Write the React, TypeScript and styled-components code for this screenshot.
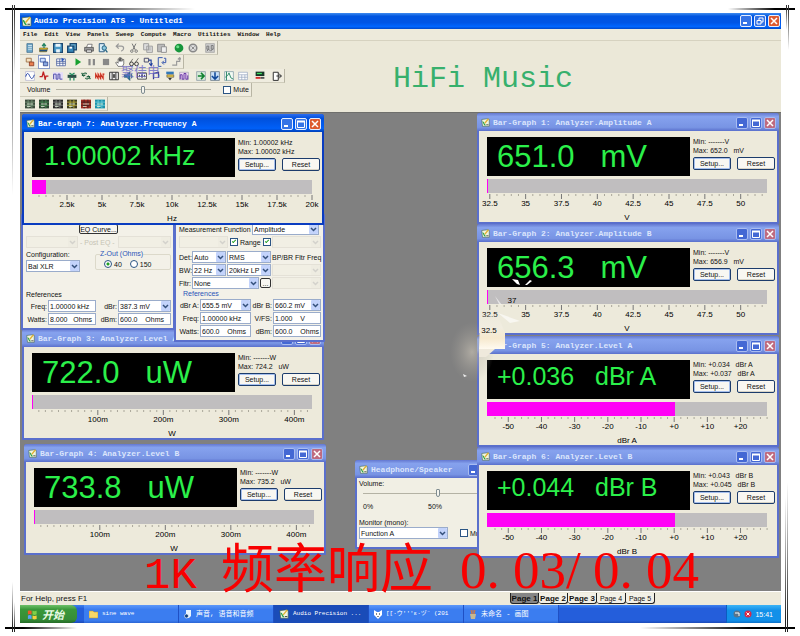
import React from 'react';
import styled, { createGlobalStyle, css } from 'styled-components';

const GlobalStyle = createGlobalStyle`
  *, *::before, *::after { box-sizing: border-box; }
  body { margin: 0; background: #fff; font-family: "Liberation Sans", "Noto Sans CJK SC", sans-serif; font-size: 7px; color: #111; }
  button, input, select { font-family: inherit; font-size: 7px; color: inherit; margin: 0; padding: 0; }
  h1, h2, p { margin: 0; font-weight: 400; }
`;

const mono = '"Liberation Mono", "Noto Sans CJK SC", monospace';

/* ---------- page and decorative corners ---------- */

const Page = styled.div`
  position: relative;
  display: flex;
  flex-direction: column;
  min-height: 100vh;
  padding: 13px 19px 14px 20px;
`;

const Corner = styled.svg<{ $v: 'top' | 'bottom'; $h: 'left' | 'right' }>`
  position: absolute;
  ${(p) => p.$v}: 0;
  ${(p) => p.$h}: 0;
  pointer-events: none;
`;

function Corners() {
  return (
    <>
      <Corner $v="top" $h="left" width="200" height="200" aria-hidden="true">
        <defs>
          <linearGradient id="fr"><stop offset="0.25" stopColor="#000" /><stop offset="1" stopColor="#000" stopOpacity="0" /></linearGradient>
          <linearGradient id="fd" x2="0" y2="1"><stop offset="0.1" stopColor="#333" /><stop offset="1" stopColor="#333" stopOpacity="0" /></linearGradient>
        </defs>
        <rect x="5" y="8" width="190" height="2" fill="url(#fr)" />
        <rect x="12" y="5" width="1" height="190" fill="url(#fd)" />
        <rect x="14" y="5" width="1" height="70" fill="url(#fd)" />
      </Corner>
      <Corner $v="top" $h="right" width="100" height="60" aria-hidden="true">
        <defs>
          <linearGradient id="fl"><stop offset="0" stopColor="#000" stopOpacity="0" /><stop offset="0.7" stopColor="#000" /></linearGradient>
        </defs>
        <rect x="28" y="8" width="67" height="2" fill="url(#fl)" />
        <rect x="95" y="5" width="0" height="0" />
        <rect x="95" y="8" width="0" height="0" />
        <rect x="86" y="5" width="1" height="25" fill="url(#fd)" />
        <rect x="88" y="5" width="1" height="45" fill="url(#fd)" />
      </Corner>
      <Corner $v="bottom" $h="left" width="100" height="60" aria-hidden="true">
        <defs>
          <linearGradient id="fu" x2="0" y2="1"><stop offset="0" stopColor="#333" stopOpacity="0" /><stop offset="0.9" stopColor="#222" /></linearGradient>
        </defs>
        <rect x="5" y="50" width="72" height="2" fill="url(#fr)" />
        <rect x="12" y="5" width="1" height="50" fill="url(#fu)" />
        <rect x="14" y="25" width="1" height="30" fill="url(#fu)" />
      </Corner>
      <Corner $v="bottom" $h="right" width="160" height="160" aria-hidden="true">
        <rect x="0" y="150" width="155" height="2" fill="url(#fl)" />
        <rect x="145" y="20" width="1" height="135" fill="url(#fu)" />
        <rect x="147" y="5" width="1" height="150" fill="url(#fu)" />
      </Corner>
    </>
  );
}

/* ---------- window chrome ---------- */

const AppBar = styled.header`
  display: flex;
  align-items: center;
  gap: 2px;
  height: 16px;
  padding: 0 1px;
  background: linear-gradient(#3f8cf0, #0055e0 20%, #0055e5 60%, #0066ff 85%, #0048c8);
`;

const TitleText = styled.h2<{ $active?: boolean }>`
  flex: 1;
  overflow: hidden;
  white-space: nowrap;
  font: bold 8px/12px ${mono};
  color: ${(p) => (p.$active ? '#fff' : '#dbe5fc')};
`;

const Controls = styled.div`
  display: flex;
  gap: 2px;
`;

const ControlButton = styled.button<{ $close?: boolean; $dim?: boolean }>`
  display: grid;
  place-items: center;
  width: 12px;
  height: 12px;
  border: 1px solid ${(p) => (p.$dim ? '#a9bcf0' : '#e6eeff')};
  border-radius: 2px;
  background: ${(p) =>
    p.$close ? (p.$dim ? '#bf6b80' : '#dd5a30') : p.$dim ? '#4468d4' : '#3573e6'};
`;

function WindowControls({ dim, restore }: { dim?: boolean; restore?: boolean }) {
  return (
    <Controls>
      <ControlButton $dim={dim} aria-label="Minimize">
        <svg width="8" height="8"><path d="M1 6h4" stroke="#fff" strokeWidth="2" /></svg>
      </ControlButton>
      <ControlButton $dim={dim} aria-label={restore ? 'Restore' : 'Maximize'}>
        {restore ? (
          <svg width="8" height="8"><path d="M3 3V1h4v4H5M1 3.5h4v3.5H1z" stroke="#fff" fill="none" /></svg>
        ) : (
          <svg width="8" height="8"><path d="M.5 1.5h7v6h-7z" stroke="#fff" fill="none" /><path d="M0 1.5h8" stroke="#fff" strokeWidth="2" /></svg>
        )}
      </ControlButton>
      <ControlButton $dim={dim} $close aria-label="Close">
        <svg width="8" height="8"><path d="M1 1l6 6M7 1L1 7" stroke="#fff" strokeWidth="1.5" /></svg>
      </ControlButton>
    </Controls>
  );
}

function AppIcon({ size = 11 }: { size?: number }) {
  return (
    <svg width={size} height={size} viewBox="0 0 12 12" aria-hidden="true">
      <path d="M1 2l8-1 2 1v9H2z" fill="#f2f6e0" stroke="#385a40" strokeWidth=".7" />
      <path d="M2 5c2 0 2 5 4 4" stroke="#28a048" strokeWidth="1.6" fill="none" />
      <path d="M5 7l5-6" stroke="#e0b030" strokeWidth="1.6" />
      <path d="M7 9h3" stroke="#333" />
    </svg>
  );
}

/* ---------- menu and toolbars ---------- */

const MenuBar = styled.nav`
  display: flex;
  gap: 7px;
  height: 12px;
  padding-left: 3px;
  background: #edeadb;
  border-bottom: 1px solid #d6d2c0;
`;

const MenuItem = styled.button`
  border: 0;
  background: none;
  font: bold 6px/11px ${mono};
`;

const ToolZone = styled.section`
  position: relative;
  display: grid;
  grid-template-columns: 373px 1fr;
  height: 71px;
  background: #ebe8d8;
`;

const ToolRows = styled.div`
  display: flex;
  flex-direction: column;
  align-items: flex-start;
`;

const ToolRow = styled.div`
  display: flex;
  align-items: center;
  gap: 4px;
  height: 14px;
  padding: 0 2px 0 5px;
  border-right: 1px solid #b8b5a4;
  border-bottom: 1px solid #cfccbb;
  background: #efecdf;
`;

const ToolButton = styled.button<{ $gap?: boolean; $on?: boolean }>`
  display: grid;
  place-items: center;
  width: 10px;
  height: 12px;
  margin-left: ${(p) => (p.$gap ? 3 : 0)}px;
  border: 0;
  background: ${(p) => (p.$on ? '#fff' : 'none')};
  box-shadow: ${(p) => (p.$on ? '0 0 0 1px #8a9cc8' : 'none')};
`;

const Hero = styled.h1`
  padding-top: 20px;
  font: 30px/36px ${mono};
  white-space: nowrap;
  color: #37b06d;
`;

const Watermark = styled.span`
  position: absolute;
  left: 101px;
  top: 23px;
  font-size: 13px;
  line-height: 16px;
  color: #6d68c6;
  opacity: 0.8;
`;

const icons: Record<string, React.ReactNode> = {
  doc: <><path d="M3 1h9v14H3z" fill="#6fa8c8" stroke="#2a5a80" /><path d="M5 4h6M5 7h6M5 10h6" stroke="#fff" /></>,
  open: <><path d="M1 8h13l-2 6H1z" fill="#e8c030" stroke="#705a10" /><path d="M8 8V2M5 5l3-4 3 4" stroke="#208060" strokeWidth="2" fill="none" /><path d="M1 12h12" stroke="#205080" strokeWidth="3" /></>,
  save: <><path d="M1 1h14v14H1z" fill="#4a9ac8" stroke="#1c4870" strokeWidth="2" /><path d="M4 1h8v5H4zM5 10h6v5H5z" fill="#e8f4fa" /></>,
  saveall: <><path d="M5 1h10v10H5z" fill="#68b0d4" stroke="#1c4870" strokeWidth="2" /><path d="M1 5h10v10H1z" fill="#3a8abc" stroke="#1c4870" strokeWidth="2" /><path d="M4 6h4v3H4z" fill="#fff" /></>,
  print: <><path d="M4 7l2-5h7l-1 5" fill="#fff" stroke="#444" /><path d="M1 7h14v6H1z" fill="#999" stroke="#333" /><path d="M4 11h8v4H4z" fill="#ddd" stroke="#333" /></>,
  preview: <><path d="M2 1h8v13H2z" fill="#d8ecf6" stroke="#2a5a80" strokeWidth="1.5" /><circle cx="10" cy="8" r="3.5" fill="#8cc8e0" stroke="#206080" strokeWidth="1.5" /><path d="M12 11l3 4" stroke="#206080" strokeWidth="2" /></>,
  undo: <path d="M2 5h8c5 0 5 6 0 8M6 1L2 5l4 4" fill="none" stroke="#999" strokeWidth="2" />,
  cut: <><path d="M5 1l5 10M11 1L6 11" stroke="#777" strokeWidth="1.6" /><circle cx="4.5" cy="13" r="2" fill="none" stroke="#777" strokeWidth="1.5" /><circle cx="11.5" cy="13" r="2" fill="none" stroke="#777" strokeWidth="1.5" /></>,
  copy: <><path d="M1 1h8v10H1zM6 5h9v10H6z" fill="#ddd" stroke="#999" strokeWidth="1.4" /><path d="M8 8h5M8 11h5" stroke="#999" /></>,
  paste: <><path d="M1 2h11v12H1z" fill="#bbb" stroke="#888" strokeWidth="1.4" /><path d="M7 6h8v9H7z" fill="#eee" stroke="#888" strokeWidth="1.4" /></>,
  go: <><circle cx="8" cy="8" r="7" fill="#18963c" /><circle cx="6" cy="6" r="2.5" fill="#6ade88" /></>,
  halt: <><circle cx="8" cy="8" r="6" fill="#ddd" stroke="#888" strokeWidth="2.5" /><path d="M5.5 5.5l5 5M10.5 5.5l-5 5" stroke="#888" strokeWidth="1.5" /></>,
  tools: <><path d="M1 1h14v14H1z" fill="#ccc" stroke="#999" /><path d="M3 5h3v5H3zM10 4h3v6h-3zM3 13l3-3 3 3 4-4" stroke="#777" fill="none" strokeWidth="1.5" /></>,
  tag: <><path d="M2 2h8v6H2z" fill="#f4e0c0" stroke="#a07850" strokeWidth="1.5" /><path d="M7 8h7v6H7z" fill="#e88050" stroke="#803018" strokeWidth="1.2" /></>,
  net: <><path d="M2 2h8v6H2z" fill="#cfe0ff" stroke="#4868b0" strokeWidth="1.5" /><path d="M7 8h7v6H7z" fill="#88a8e0" stroke="#283c88" strokeWidth="1.2" /></>,
  grid: <><path d="M1 3h14v11H1zM1 7h14M1 10h14M6 3v11M11 3v11" fill="#fff" stroke="#405898" strokeWidth="1.2" /><path d="M9 1l4 3-4 3z" fill="#2050c0" /></>,
  play: <path d="M4 2l9 6-9 6z" fill="#18a030" />,
  pause: <path d="M4 3v10M11 3v10" stroke="#888" strokeWidth="3.5" />,
  stop: <path d="M3 3h10v10H3z" fill="#888" />,
  hand: <path d="M5 15L1 9l2-1 2 2V3h2v4V1h2v6V2h2v5l1-3h2v7l-2 4z" fill="#fff" stroke="#333" />,
  glasses: <><circle cx="4" cy="11" r="3" fill="none" stroke="#333" strokeWidth="1.5" /><circle cx="12" cy="11" r="3" fill="none" stroke="#333" strokeWidth="1.5" /><path d="M2 9l4-6M10 9l5-7M7 11h2" stroke="#333" /></>,
  step1: <><path d="M2 2h7v6H2z" fill="none" stroke="#446" strokeWidth="1.5" /><path d="M9 5h4v7M10 10l3 4 2-4" stroke="#2040a0" strokeWidth="1.8" fill="none" /></>,
  step2: <path d="M9 1H2v14h5M11 2h3v7H9M11 6L8 9l3 3" stroke="#3858b0" strokeWidth="1.6" fill="none" />,
  step3: <path d="M2 13h7V7h5V2M11 4l3-3 2 3" stroke="#999" strokeWidth="1.8" fill="none" />,
  sine: <><path d="M1 1h14v14H1z" fill="#fff" stroke="#aac" /><path d="M1 9c3-9 5-4 7 0s4 5 7-3" stroke="#2848a8" strokeWidth="1.6" fill="none" /></>,
  meter: <path d="M1 9h4l2-8 3 13 1-6h4" stroke="#c02020" strokeWidth="2" fill="none" />,
  wave: <><path d="M0 2h16v12H0z" fill="#e4dcfa" /><path d="M1 13V5h4v8h3V5h3v8h4" stroke="#5050a8" strokeWidth="1.6" fill="none" /></>,
  dsp: <><path d="M1 6h14v5H1z" fill="#2a5048" /><path d="M4 3l4 3 4-3M5 11v4M11 11v4" stroke="#209060" strokeWidth="2" fill="none" /></>,
  link: <path d="M2 8c0-5 6-6 7-3M14 8c0 5-6 6-7 3M1 3l3 5 3-2M15 13l-3-5-3 2" stroke="#1c6040" strokeWidth="1.7" fill="none" />,
  red: <><path d="M1 3h14v10H1z" fill="#f8d0c0" /><path d="M1 12V5l4 7V5l4 7V5l4 7V5h2" stroke="#c83020" strokeWidth="1.7" fill="none" /></>,
  film: <path d="M1 2h14v12H1zM5 2v12M11 2v12M7 5v6M9 5v6" stroke="#333" strokeWidth="1.5" fill="#eee" />,
  speaker: <path d="M2 6h4l5-5v14l-5-5H2zM13 4c2 3 2 6 0 8" fill="#2878a8" stroke="#184060" />,
  dcx: <path d="M1 3h14v10H1zM4 6v4M7 6h2v4H7zM12 6v4" stroke="#444" strokeWidth="1.5" fill="#fff" />,
  note: <path d="M4 13V4l8-2v9" stroke="#303888" strokeWidth="2" fill="none" />,
  stack: <><path d="M2 1h12v4H2z" fill="#3078b8" /><path d="M3 6h11v4H3z" fill="#e0c040" stroke="#555" /><path d="M5 11l3 4 3-4z" fill="#333" /></>,
  bars: <><path d="M1 2h14v12H1z" fill="#f0d8f4" stroke="#99a" /><path d="M2 13V6h3v7h3V4h3v9h3V7" stroke="#6030a0" strokeWidth="1.5" fill="none" /></>,
  right: <><path d="M1 1h14v14H1z" fill="#d8ead8" stroke="#789" /><path d="M3 8h9M8 3l5 5-5 5" stroke="#108030" strokeWidth="2.5" fill="none" /></>,
  down: <><path d="M1 1h14v14H1z" fill="#c8e0f8" stroke="#456" /><path d="M8 2v10M3 8l5 5 5-5" stroke="#104898" strokeWidth="2.5" fill="none" /></>,
  chart: <><path d="M1 1h14v14H1z" fill="#f4fbf4" stroke="#6a8a9a" /><path d="M2 10l4-3 2-4 3 8 4 2M4 1v14" stroke="#208060" strokeWidth="1.4" fill="none" /></>,
  table: <path d="M1 2h14v12H1zM1 6h14M1 10h14M6 6v8M11 6v8" fill="#fff" stroke="#8a9ab8" />,
  display: <><path d="M1 1h14v7H1z" fill="#183828" /><path d="M3 4h8" stroke="#40e060" strokeWidth="2" /><path d="M1 11h8" stroke="#d03030" strokeWidth="3" /><path d="M9 11h6" stroke="#555" strokeWidth="3" /></>,
  exit: <path d="M2 2h8v13H2zM7 8h8M11 4l4 4-4 4" stroke="#333" strokeWidth="1.6" fill="#fff" />,
};

const tile = (bg: string, fg: string) => (
  <>
    <path d="M0 1h16v14H0z" fill={bg} />
    <path d="M0 5h16M0 10h16M5 1v14M11 1v14" stroke={fg} strokeWidth="1.3" />
    <path d="M3 8h10M3 12h6" stroke="#dcecd4" strokeWidth="1.3" />
  </>
);
icons.t1 = tile('#3a4a3c', '#7a9a7c');
icons.t2 = tile('#2c4030', '#4a9058');
icons.t3 = tile('#282828', '#888');
icons.t4 = tile('#3c3c20', '#c8b840');
icons.t5 = tile('#a02c20', '#402020');
icons.t6 = tile('#1c90a8', '#70d0e0');

/* A leading "|" starts a new group, a leading "*" marks a pressed button. */
const toolbars = [
  ['doc', 'open', 'save', 'saveall', '|print', 'preview', '|undo', 'cut', 'copy', 'paste', '|go', 'halt', '|tools'],
  ['tag', '*net', '|grid', '|play', 'pause', 'stop', 'hand', 'glasses', 'step1', 'step2', 'step3'],
  ['sine', 'meter', 'wave', 'dsp', 'link', 'red', 'film', 'speaker', 'dcx', 'note', 'stack', 'bars', '|right', 'down', 'chart', 'table', '|display', '|exit'],
];

function Tools({ items }: { items: string[] }) {
  return (
    <ToolRow>
      {items.map((item) => {
        const name = item.replace(/^[|*]/, '');
        return (
          <ToolButton key={name} $gap={item[0] === '|'} $on={item[0] === '*'} aria-label={name}>
            <svg width="10" height="10" viewBox="0 0 16 16">{icons[name]}</svg>
          </ToolButton>
        );
      })}
    </ToolRow>
  );
}

const Slider = styled.input<{ $w: number }>`
  appearance: none;
  width: ${(p) => p.$w}px;
  height: 10px;
  background: linear-gradient(#b4b2a4, #b4b2a4) center / 100% 1px no-repeat;
  &::-webkit-slider-thumb {
    appearance: none;
    width: 4px;
    height: 8px;
    border: 1px solid #7f8c90;
    border-radius: 1px 1px 2px 2px;
    background: #f6f5ee;
  }
`;

const CheckLabel = styled.label`
  display: flex;
  align-items: center;
  gap: 2px;
  white-space: nowrap;
`;

const Check = styled.input`
  appearance: none;
  width: 8px;
  height: 8px;
  border: 1px solid #2b5584;
  background: #fff;
  &:checked::after {
    content: "";
    display: block;
    width: 4px;
    height: 2px;
    margin: 1px;
    border-left: 1px solid #21a121;
    border-bottom: 1px solid #21a121;
    transform: rotate(-45deg);
  }
`;

const VolumeLabel = styled.label`
  display: flex;
  align-items: center;
  gap: 6px;
  margin: 0 8px 0 2px;
`;

/* ---------- desktop canvas ---------- */

const Canvas = styled.main`
  position: relative;
  flex: 1;
  min-height: 479px;
  background: #808080;
  border-top: 1px solid #6f6f6c;
`;

const Frame = styled.section<{ $x: number; $y: number; $w: number; $h: number; $active?: boolean }>`
  position: absolute;
  left: ${(p) => p.$x}px;
  top: ${(p) => p.$y}px;
  width: ${(p) => p.$w}px;
  min-height: ${(p) => p.$h}px;
  display: flex;
  flex-direction: column;
  padding: 0 2px 2px;
  border-radius: 3px 3px 0 0;
  background: ${(p) => (p.$active ? '#0a3cc0' : '#5a6fcc')};
`;

const TitleBar = styled.header<{ $active?: boolean }>`
  display: flex;
  align-items: center;
  gap: 3px;
  height: 18px;
  margin: 0 -2px;
  padding: 1px 3px 0 4px;
  border-radius: 3px 3px 0 0;
  background: ${(p) =>
    p.$active
      ? 'linear-gradient(#2a6cf0, #0050dc 25%, #0060f8 80%, #0040b8)'
      : 'linear-gradient(#6478d0, #86a2ee 20%, #7894e4 80%, #5a70cc)'};
`;

const Body = styled.div`
  flex: 1;
  padding: 6px 7px 0 8px;
  background: #edeadb;
`;

const Readout = styled.div`
  display: grid;
  grid-template-columns: 203px 1fr;
  gap: 3px;
`;

const Lcd = styled.output<{ $size: number }>`
  display: block;
  height: 39px;
  padding-left: ${(p) => (p.$size === 27 ? 12 : 10)}px;
  background: #000;
  color: #2bf04a;
  font-size: ${(p) => p.$size}px;
  line-height: ${(p) => (p.$size > 28 ? 40 : p.$size > 26 ? 36 : 32)}px;
  white-space: pre;
`;

const Stats = styled.div`
  display: grid;
  grid-template-columns: 38px 38px;
  column-gap: 6px;
  align-content: start;
  margin-right: -7px;
`;

const Stat = styled.p`
  grid-column: 1 / -1;
  line-height: 9px;
  white-space: pre;
`;

const PushButton = styled.button<{ $focus?: boolean }>`
  height: 13px;
  margin-top: 2px;
  border: 1px solid #1c3c6c;
  border-radius: 2px;
  background: #f8f7f2;
  line-height: 9px;
  box-shadow: ${(p) => (p.$focus ? 'inset 0 0 0 1px #a6c0ee' : 'inset 0 -1px #d8d4c6')};
`;

const Track = styled.div`
  height: 14px;
  margin: 3px 3px 0 0;
  background: #c0bebf;
`;

const Fill = styled.div`
  height: 14px;
  min-width: 1px;
  background: #ff00f6;
`;

const AxisSvg = styled.svg`
  display: block;
  width: calc(100% - 3px);
  height: 29px;
  overflow: visible;
  font-size: 8px;
`;

interface Graph {
  title: string;
  x: number;
  y: number;
  value: string;
  size: number;
  min: string;
  max: string;
  fill: number;
  first: number;
  step: number;
  minor: number;
  labels: string[];
  unit: string;
  active?: boolean;
}

function Axis({ first, step, minor, labels, unit }: Graph) {
  const ticks: { pos: number; major: boolean }[] = [];
  for (let i = -minor; ; i++) {
    const pos = first + (i * step) / minor;
    if (pos > 100.2) break;
    if (pos >= 1) ticks.push({ pos, major: i % minor === 0 && i >= 0 });
  }
  return (
    <AxisSvg>
      {ticks.map((t) => (
        <line key={t.pos} x1={`${t.pos}%`} x2={`${t.pos}%`} y1="1" y2={t.major ? 6 : 3} stroke={t.major ? '#777' : '#aaa79a'} />
      ))}
      {labels.map((l, i) => (
        <text key={l} x={`${first + i * step}%`} y="13" textAnchor="middle">{l}</text>
      ))}
      <text x="50%" y="27" textAnchor="middle">{unit}</text>
    </AxisSvg>
  );
}

function GraphWindow(g: Graph) {
  return (
    <Frame $x={g.x} $y={g.y} $w={302} $h={110} $active={g.active}>
      <TitleBar $active={g.active}>
        <AppIcon size={9} />
        <TitleText $active={g.active}>{g.title}</TitleText>
        <WindowControls dim={!g.active} />
      </TitleBar>
      <Body>
        <Readout>
          <Lcd $size={g.size}>{g.value}</Lcd>
          <Stats>
            <Stat>Min: {g.min}</Stat>
            <Stat>Max: {g.max}</Stat>
            <PushButton $focus>Setup...</PushButton>
            <PushButton>Reset</PushButton>
          </Stats>
        </Readout>
        <Track><Fill style={{ width: `${g.fill}%` }} /></Track>
        <Axis {...g} />
      </Body>
    </Frame>
  );
}

const volts = { first: 1, step: 12.8, minor: 5, labels: ['32.5', '35', '37.5', '40', '42.5', '45', '47.5', '50'], unit: 'V', fill: 0, size: 31 };
const watts = { first: 23.5, step: 23.4, minor: 10, labels: ['100m', '200m', '300m', '400m'], unit: 'W', fill: 0, size: 31 };
const decibels = { first: 7.6, step: 11.85, minor: 5, labels: ['-50', '-40', '-30', '-20', '-10', '+0', '+10', '+20'], fill: 67, size: 25 };

/* ---------- generator and analyzer panels ---------- */

const Panel = styled.div`
  flex: 1;
  padding: 0 2px 0 3px;
  background: #f3f1e8;
`;

const Line = styled.div<{ $cols: string; $gap?: number }>`
  display: grid;
  grid-template-columns: ${(p) => p.$cols};
  align-items: center;
  column-gap: ${(p) => p.$gap ?? 1}px;
  min-height: 12px;
  white-space: nowrap;
`;

const fieldBox = css`
  width: 100%;
  min-width: 0;
  height: 12px;
  padding-left: 1px;
  border: 1px solid #9aaccb;
  border-radius: 0;
  background: #fff;
  white-space: pre;
`;

const TextField = styled.input`
  ${fieldBox}
`;

const ComboWrap = styled.span<{ $off?: boolean }>`
  position: relative;
  display: block;
  min-width: 0;
  opacity: ${(p) => (p.$off ? 0.35 : 1)};
`;

const ComboSelect = styled.select`
  ${fieldBox}
  appearance: none;
  display: block;
  opacity: 1;
  &:disabled { background: #efecdf; border-color: #c9c6b8; }
`;

const Arrow = styled.svg`
  position: absolute;
  top: 1px;
  right: 1px;
  pointer-events: none;
`;

function Combo({ value = '', label, off, id }: { value?: string; label: string; off?: boolean; id?: string }) {
  return (
    <ComboWrap $off={off}>
      <ComboSelect id={id} aria-label={label} disabled={off} defaultValue={value}>
        <option value={value}>{value}</option>
      </ComboSelect>
      <Arrow width="9" height="10">
        <rect width="9" height="10" rx="1" fill={off ? '#e6e3d6' : '#c3d3fb'} />
        <path d="M2 4l2.500 2.500L7 4" stroke={off ? '#999' : '#34507c'} strokeWidth="1.5" fill="none" />
      </Arrow>
    </ComboWrap>
  );
}

const Tag = styled.span<{ $end?: boolean; $blue?: boolean; $faint?: boolean }>`
  padding-left: ${(p) => (p.$blue ? 4 : 0)}px;
  text-align: ${(p) => (p.$end ? 'right' : 'left')};
  color: ${(p) => (p.$blue ? '#2a55b8' : p.$faint ? '#c6c3b4' : '#111')};
  line-height: 9px;
`;

const SmallButton = styled.button`
  height: 10px;
  border: 1px solid #333;
  border-radius: 2px;
  background: #f8f7f2;
  line-height: 7px;
`;

const Group = styled.fieldset`
  display: flex;
  gap: 8px;
  align-self: start;
  height: 20px;
  margin: 0;
  padding: 1px 8px 0;
  border: 1px solid #dcd9ca;
  border-radius: 2px;
  legend { padding: 0; margin-left: -4px; color: #2a55b8; line-height: 8px; }
`;

const Radio = styled.input`
  appearance: none;
  width: 8px;
  height: 8px;
  border: 1px solid #2b5584;
  border-radius: 50%;
  background: #fff;
  &:checked { background: radial-gradient(#21a121 0 1px, #fff 2px); }
`;

const Stack = styled.div`
  display: flex;
  flex-direction: column;
  gap: 1px;
`;

const Section = styled.div<{ $top: number }>`
  display: flex;
  flex-direction: column;
  gap: 1px;
  padding-top: ${(p) => p.$top}px;
`;

function Field({ label, value }: { label: string; value: string }) {
  return <TextField aria-label={label} defaultValue={value} />;
}

function GeneratorPanel() {
  return (
    <Frame $x={1} $y={100} $w={154} $h={117}>
      <Panel>
        <Section $top={10}>
          <Line $cols="52px 39px 1fr"><span /><SmallButton>EQ Curve...</SmallButton><span /></Line>
          <Line $cols="52px 36px 1fr" $gap={2}>
            <Combo label="Generator EQ" off /><Tag $faint>- Post EQ -</Tag><Combo label="Post EQ" off />
          </Line>
        </Section>
        <Section $top={2}>
          <Line $cols="54px 1fr" $gap={15}>
            <Stack><Tag>Configuration:</Tag><Combo label="Configuration" value="Bal XLR" /></Stack>
            <Group>
              <legend>Z-Out (Ohms)</legend>
              <CheckLabel><Radio type="radio" name="z" defaultChecked />40</CheckLabel>
              <CheckLabel><Radio type="radio" name="z" />150</CheckLabel>
            </Group>
          </Line>
        </Section>
        <Section $top={18}>
          <Tag>References</Tag>
          <Line $cols="21px 48px 20px 1fr">
            <Tag $end>Freq:</Tag><Field label="Freq" value="1.00000 kHz" />
            <Tag $end>dBr:</Tag><Combo label="dBr" value="387.3   mV" />
          </Line>
          <Line $cols="21px 48px 20px 1fr">
            <Tag $end>Watts:</Tag><Field label="Watts" value="8.000   Ohms" />
            <Tag $end>dBm:</Tag><Field label="dBm" value="600.0    Ohms" />
          </Line>
        </Section>
      </Panel>
    </Frame>
  );
}

function AnalyzerPanel() {
  return (
    <Frame $x={154} $y={100} $w={151} $h={129}>
      <Panel>
        <Section $top={10}>
          <Line $cols="73px 67px" $gap={0}><Tag>Measurement Function :</Tag><Combo label="Measurement Function" value="Amplitude" /></Line>
          <Line $cols="49px 40px 1fr" $gap={2}>
            <Combo label="Range value" off />
            <CheckLabel>
              <Check type="checkbox" defaultChecked aria-label="Range A" />Range
              <Check type="checkbox" defaultChecked aria-label="Range B" />
            </CheckLabel>
            <Combo label="Range B value" off />
          </Line>
        </Section>
        <Section $top={3}>
          <Line $cols="12px 34px 44px 1fr"><Tag>Det:</Tag><Combo label="Det" value="Auto" /><Combo label="Detector" value="RMS" /><Tag $end>BP/BR Fltr Freq</Tag></Line>
          <Line $cols="12px 34px 44px 1fr"><Tag>BW:</Tag><Combo label="BW" value="22 Hz" /><Combo label="High BW" value="20kHz LP" /><Combo label="Freq A" off /></Line>
          <Line $cols="12px 67px 11px 1fr"><Tag>Fltr:</Tag><Combo label="Fltr" value="None" /><SmallButton>...</SmallButton><Combo label="Freq B" off /></Line>
        </Section>
        <Section $top={0}>
          <Tag $blue>References</Tag>
          <Line $cols="20px 51px 20px 1fr"><Tag $end>dBr A:</Tag><Combo label="dBr A" value="655.5   mV" /><Tag $end>dBr B:</Tag><Combo label="dBr B" value="660.2   mV" /></Line>
          <Line $cols="20px 51px 20px 1fr"><Tag $end>Freq:</Tag><Field label="Freq" value="1.00000 kHz" /><Tag $end>V/FS:</Tag><Field label="V/FS" value="1.000    V" /></Line>
          <Line $cols="20px 51px 20px 1fr"><Tag $end>Watts:</Tag><Field label="Watts" value="600.0    Ohms" /><Tag $end>dBm:</Tag><Field label="dBm" value="600.0    Ohms" /></Line>
        </Section>
      </Panel>
    </Frame>
  );
}

/* ---------- headphone window ---------- */

const SpeakerBody = styled.div`
  flex: 1;
  display: flex;
  flex-direction: column;
  padding: 1px 2px 0;
  background: #f1efe4;
  line-height: 9px;
`;

const Scale = styled.div`
  padding: 0 4px 7px;
`;

const ScaleLabels = styled.div`
  display: grid;
  grid-template-columns: 65px 1fr;
  padding-top: 2px;
`;

const SpeakerRow = styled.div`
  display: grid;
  grid-template-columns: 89px 1fr;
  align-items: center;
  column-gap: 12px;
`;

function HeadphoneWindow() {
  return (
    <Frame $x={335} $y={347} $w={156} $h={89}>
      <TitleBar>
        <AppIcon size={9} />
        <TitleText>Headphone/Speaker</TitleText>
        <WindowControls dim />
      </TitleBar>
      <SpeakerBody>
        <label htmlFor="hp">Volume:</label>
        <Scale>
          <Slider id="hp" type="range" $w={144} defaultValue={52} />
          <ScaleLabels><span>0%</span><span>50%</span></ScaleLabels>
        </Scale>
        <label htmlFor="mon">Monitor (mono):</label>
        <SpeakerRow>
          <Combo id="mon" label="Monitor (mono)" value="Function A" />
          <CheckLabel><Check type="checkbox" />Mute</CheckLabel>
        </SpeakerRow>
      </SpeakerBody>
    </Frame>
  );
}

/* ---------- canvas overlays ---------- */

const Patch = styled.svg`
  position: absolute;
  left: 430px;
  top: 155px;
  pointer-events: none;
  font-size: 8px;
`;

function PatchMarks() {
  return (
    <Patch width="110" height="125">
      <defs>
        <linearGradient id="cream" x2="0" y2="1"><stop offset="0" stopColor="#f1ede0" stopOpacity="0" /><stop offset="0.4" stopColor="#f1ede0" /><stop offset="0.7" stopColor="#f6e9ce" /><stop offset="1" stopColor="#fffaf0" /></linearGradient>
        <radialGradient id="glow"><stop offset="0" stopColor="#cfc8ba" stopOpacity=".6" /><stop offset="1" stopColor="#a8a49c" stopOpacity="0" /></radialGradient>
      </defs>
      <ellipse cx="22" cy="84" rx="22" ry="30" fill="url(#glow)" />
      <path d="M30 45h17l8 20v16H29z" fill="url(#cream)" />
      <path d="M29 81h16l-9 8h-7z" fill="#efe9dc" />
      <path d="M45 28l7 9-3-1zM48 45l22 8-10 2z" fill="#fff" opacity=".6" />
      <path d="M62 11l5 5 3 1-2-5zM75 17l5-5 2 1-5 4z" fill="#fff" />
      <path d="M13 106l4 2-3 1z" fill="#eee" />
      <text x="39" y="65" textAnchor="middle">32.5</text>
      <text x="62" y="35" textAnchor="middle">37</text>
    </Patch>
  );
}

const Banner = styled.p`
  position: absolute;
  left: 124px;
  top: 437px;
  display: grid;
  grid-template-columns: 77px 239px repeat(2, 53px) 27px repeat(2, 53px);
  align-items: baseline;
  line-height: 40px;
  white-space: nowrap;
  color: #f80000;
  pointer-events: none;
  font-family: "Liberation Serif", "Noto Sans CJK SC", serif;
  font-size: 53px;
`;

const BannerMono = styled.span`
  font-family: ${mono};
  font-size: 44px;
`;

/* ---------- status bar and taskbar ---------- */

const StatusBar = styled.footer`
  display: grid;
  grid-template-columns: 489px auto 1fr;
  height: 14px;
  padding: 1px 0 0 1px;
  border-top: 1px solid #fff;
  background: #edeadb;
  font-size: 8px;
  line-height: 12px;
`;

const Tabs = styled.div`
  display: flex;
`;

const Tab = styled.button<{ $bold?: boolean; $on?: boolean }>`
  width: 29px;
  height: 11px;
  border: 1px solid #222;
  border-top: 0;
  border-left-width: ${(p) => (p.$on ? 1 : 0)}px;
  border-radius: 0 0 3px 3px;
  background: ${(p) => (p.$on ? '#858585' : '#f2f0e6')};
  font-size: ${(p) => (p.$bold ? 8 : 7)}px;
  font-weight: ${(p) => (p.$bold ? 700 : 400)};
  line-height: 9px;
  white-space: nowrap;
`;

const TaskBar = styled.footer`
  display: flex;
  height: 18px;
  background: linear-gradient(#3c81f0, #245edb 20%, #245edb 85%, #1c4bb8);
`;

const StartButton = styled.button`
  display: flex;
  align-items: center;
  gap: 4px;
  width: 57px;
  margin-right: 7px;
  padding-left: 7px;
  border: 0;
  border-radius: 0 6px 6px 0;
  background: linear-gradient(#6cc068, #3a983a 25%, #368c36 80%, #256c28);
  color: #eafbe6;
  font: italic bold 11px/14px "Noto Sans CJK SC", sans-serif;
`;

const Task = styled.button<{ $on?: boolean }>`
  display: flex;
  align-items: center;
  gap: 4px;
  width: 95px;
  padding-left: 5px;
  border: 0;
  border-right: 1px solid #1f50c4;
  background: ${(p) => (p.$on ? '#1a4cb8' : 'linear-gradient(#5c98fa, #3b7df0 25%, #3b7df0 85%, #2c66d4)')};
  color: #fff;
  font: 7px/10px ${mono};
  white-space: pre;
  overflow: hidden;
`;

const TaskLatin = styled.span`
  font-size: 6px;
`;

const Tray = styled.div`
  display: flex;
  align-items: center;
  gap: 3px;
  margin-left: auto;
  padding: 0 8px 0 6px;
  border-left: 1px solid #0c5cc0;
  background: linear-gradient(#3cb4f6, #1290e9 30%, #1290e9 85%, #0c70c8);
  color: #fff;
  font-size: 7px;
`;

export default function App() {
  return (
    <>
      <GlobalStyle />
      <Page>
        <Corners />
        <AppBar>
          <AppIcon />
          <TitleText as="h1" $active>Audio Precision ATS - Untitled1</TitleText>
          <WindowControls restore />
        </AppBar>
        <MenuBar>
          {['File', 'Edit', 'View', 'Panels', 'Sweep', 'Compute', 'Macro', 'Utilities', 'Window', 'Help'].map((m) => (
            <MenuItem key={m}>{m}</MenuItem>
          ))}
        </MenuBar>
        <ToolZone>
          <ToolRows>
            {toolbars.map((items) => <Tools key={items[0]} items={items} />)}
            <ToolRow>
              <VolumeLabel>Volume<Slider type="range" $w={155} defaultValue={56} /></VolumeLabel>
              <CheckLabel><Check type="checkbox" />Mute</CheckLabel>
            </ToolRow>
            <Tools items={['t1', 't2', 't3', 't4', 't5', 't6']} />
          </ToolRows>
          <Hero>HiFi Music</Hero>
          <Watermark>聚佳电</Watermark>
        </ToolZone>
        <Canvas>
          <GraphWindow {...watts} title="Bar-Graph 3: Analyzer.Level A" x={2} y={216} value="722.0   uW" min="-------W" max="724.2   uW" />
          <GraphWindow {...watts} title="Bar-Graph 4: Analyzer.Level B" x={4} y={331} value="733.8   uW" min="-------W" max="735.2   uW" />
          <GeneratorPanel />
          <AnalyzerPanel />
          <GraphWindow
            active title="Bar-Graph 7: Analyzer.Frequency A" x={2} y={1} value="1.00002 kHz" size={27}
            min="1.00002 kHz" max="1.00002 kHz" fill={5} first={12.5} step={12.5} minor={5}
            labels={['2.5k', '5k', '7.5k', '10k', '12.5k', '15k', '17.5k', '20k']} unit="Hz"
          />
          <HeadphoneWindow />
          <GraphWindow {...volts} title="Bar-Graph 1: Analyzer.Amplitude A" x={457} y={0} value="651.0   mV" min="-------V" max="652.0   mV" />
          <GraphWindow {...volts} title="Bar-Graph 2: Analyzer.Amplitude B" x={457} y={111} value="656.3   mV" min="-------V" max="656.9   mV" />
          <GraphWindow {...decibels} title="Bar-Graph 5: Analyzer.Level A" x={457} y={223} value="+0.036   dBr A" min="+0.034   dBr A" max="+0.037   dBr A" unit="dBr A" />
          <GraphWindow {...decibels} title="Bar-Graph 6: Analyzer.Level B" x={457} y={334} value="+0.044   dBr B" min="+0.043   dBr B" max="+0.045   dBr B" unit="dBr B" />
          <PatchMarks />
          <Banner>
            <BannerMono>1K</BannerMono>
            <span>频率响应</span>
            <span>0.</span>
            <span>03</span>
            <span>/</span>
            <span>0.</span>
            <span>04</span>
          </Banner>
        </Canvas>
        <StatusBar>
          <span>For Help, press F1</span>
          <Tabs>
            <Tab $bold $on>Page 1</Tab>
            <Tab $bold>Page 2</Tab>
            <Tab $bold>Page 3</Tab>
            <Tab>Page 4</Tab>
            <Tab>Page 5</Tab>
          </Tabs>
        </StatusBar>
        <TaskBar>
          <StartButton>
            <svg width="11" height="11" viewBox="0 0 12 12">
              <path d="M1 2q2-1 4 0v4q-2-1-4 0z" fill="#f05828" /><path d="M6 2q2 1 4.500 0v4q-2.500 1-4.500 0z" fill="#80d048" />
              <path d="M1 7q2-1 4 0v4q-2-1-4 0z" fill="#58a0f8" /><path d="M6 7q2 1 4.500 0v4q-2.500 1-4.500 0z" fill="#f8d040" />
            </svg>
            开始
          </StartButton>
          <Task>
            <svg width="9" height="9"><path d="M0 1h4l1 1h4v6H0z" fill="#f8d868" stroke="#b89028" strokeWidth=".5" /></svg>
            <TaskLatin>sine wave</TaskLatin>
          </Task>
          <Task>
            <svg width="8" height="9"><path d="M2 0h5v6l-2 2H2z" fill="#e8f4ff" /><circle cx="2.5" cy="6" r="2" fill="#104080" stroke="#fff" strokeWidth=".6" /></svg>
            声音, 语音和音频
          </Task>
          <Task $on><AppIcon size={10} /><TaskLatin>Audio Precision ...</TaskLatin></Task>
          <Task>
            <svg width="8" height="9"><path d="M0 0l3 2h2l3-2v5L4 9 0 5z" fill="#fff" /><path d="M2 4h1M5 4h1M3.500 6.500h1" stroke="#111" /></svg>
            <TaskLatin>[[·ウ'''ε·ヅ¨ (201</TaskLatin>
          </Task>
          <Task>
            <svg width="8" height="9"><path d="M1 4h6l-1 5H2z" fill="#c8b890" /><path d="M2 0l1 4M4 0v4M6 0L5 4" stroke="#e07830" /></svg>
            未命名 - 画图
          </Task>
          <Tray>
            <svg width="8" height="8"><circle cx="4" cy="4" r="3.5" fill="#58748c" /><path d="M2 3h4v3" stroke="#fff" fill="none" /></svg>
            <svg width="8" height="8"><circle cx="4" cy="4" r="3.5" fill="#d82848" /><path d="M2.500 2.500l3 3M5.500 2.500l-3 3" stroke="#fff" /></svg>
            <span>15:41</span>
          </Tray>
        </TaskBar>
      </Page>
    </>
  );
}
